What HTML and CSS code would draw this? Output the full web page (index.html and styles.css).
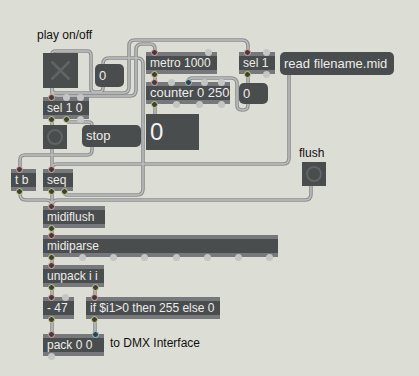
FILE: index.html
```html
<!DOCTYPE html>
<html lang="en">
<head>
    <meta charset="UTF-8">
    <title>midi player patch</title>
    <link rel="stylesheet" href="styles.css">
</head>
<body>
    <div class="patcher">
        <!-- patch cords, drawn under the boxes -->
        <svg class="cords" width="419" height="376" viewBox="0 0 419 376">
            <g class="cord-edge">
                <g id="cords">
                    <path d="M52,88 V89 Q52,93 56,93 H123 Q129,93 129,87 V46 Q129,40 135,40 H242 Q248,40 248,46 V52"/>
                    <path d="M52,88 V90 Q52,96 58,96 H130 Q136,96 136,90 V50 Q136,44 142,44 H150 Q155,44 155,49 V52"/>
                    <path d="M103,87 V88 Q103,92 99,92 H95 Q91,92 91,88 V55 Q91,51 87,51 H56 Q52,51 52,54"/>
                    <path d="M64,191 Q64,195 68,195 H137 Q143,195 143,189 V64 Q143,58 137,58 H109 Q103,58 103,64"/>
                    <path d="M248,104 V105 Q248,110 243,110 H242 Q237,110 237,105 V84 Q237,78 231,78 H193 Q188,78 188,82"/>
                    <path d="M66,119 Q66,122 70,122 H88 Q92,122 92,125"/>
                    <path d="M92,147 V150 Q92,155 87,155 H25 Q20,155 20,160 V169"/>
                    <path d="M289,75 V158 Q289,164 283,164 H57 Q52,164 52,169"/>
                    <path d="M20,191 V194 Q20,200 26,200 H46 Q52,200 52,206"/>
                    <path d="M311,186 V194 Q311,200 305,200 H58 Q52,200 52,206"/>
                    <path d="M52,88 V97 M52,119 V125 M52,149 V169 M155,73 V82 M155,104 V114 M248,73 V83 M52,191 V206 M52,227 V235 M52,257 V265 M52,287 V297 M95,287 V297 M52,318 V334 M95,318 V334"/>
                </g>
            </g>
            <use href="#cords" class="cord-core"/>
        </svg>

        <div class="comment play-label">play on/off</div>
        <div class="comment flush-label">flush</div>
        <div class="comment dmx-label">to DMX Interface</div>

        <div class="toggle">
            <svg width="35" height="35" viewBox="0 0 35 35">
                <path d="M8.5,8.5 L26.5,26.5 M26.5,8.5 L8.5,26.5"/>
            </svg>
        </div>

        <div class="msg msg-zero">0</div>

        <div class="obj sel-10">sel 1 0
            <div class="ports in"><i class="p on-in"></i><i class="p"></i><i class="p"></i></div>
            <div class="ports out"><i class="p on-out"></i><i class="p on-out"></i><i class="p"></i></div>
        </div>

        <div class="bang bang-play"></div>
        <div class="msg msg-stop">stop</div>

        <div class="obj metro">metro 1000
            <div class="ports in"><i class="p on-in"></i><i class="p"></i></div>
            <div class="ports out"><i class="p on-out"></i></div>
        </div>

        <div class="obj sel-1">sel 1
            <div class="ports in"><i class="p on-in"></i><i class="p"></i></div>
            <div class="ports out"><i class="p on-out"></i><i class="p"></i></div>
        </div>

        <div class="msg msg-read">read filename.mid</div>

        <div class="obj counter">counter 0 250
            <div class="ports in"><i class="p on-in"></i><i class="p"></i><i class="p on-cold"></i><i class="p"></i><i class="p"></i></div>
            <div class="ports out"><i class="p on-out"></i><i class="p"></i><i class="p"></i><i class="p"></i></div>
        </div>

        <div class="msg msg-reset">0</div>

        <div class="number">0</div>

        <div class="bang bang-flush"></div>

        <div class="obj tb">t b
            <div class="ports in"><i class="p on-in"></i></div>
            <div class="ports out"><i class="p on-out"></i></div>
        </div>

        <div class="obj seq">seq
            <div class="ports in"><i class="p on-in"></i></div>
            <div class="ports out"><i class="p on-out"></i><i class="p on-out"></i></div>
        </div>

        <div class="obj midiflush">midiflush
            <div class="ports in"><i class="p on-in"></i></div>
            <div class="ports out"><i class="p on-out"></i></div>
        </div>

        <div class="obj midiparse">midiparse
            <div class="ports in"><i class="p on-in"></i></div>
            <div class="ports out"><i class="p on-out"></i><i class="p"></i><i class="p"></i><i class="p"></i><i class="p"></i><i class="p"></i><i class="p"></i><i class="p"></i></div>
        </div>

        <div class="obj unpack">unpack i i
            <div class="ports in"><i class="p on-in"></i></div>
            <div class="ports out"><i class="p on-out"></i><i class="p on-out"></i></div>
        </div>

        <div class="obj minus">- 47
            <div class="ports in"><i class="p on-in"></i><i class="p"></i></div>
            <div class="ports out"><i class="p on-out"></i></div>
        </div>

        <div class="obj expr-if">if $i1&gt;0 then 255 else 0
            <div class="ports in"><i class="p on-in"></i></div>
            <div class="ports out"><i class="p on-out"></i></div>
        </div>

        <div class="obj pack">pack 0 0
            <div class="ports in"><i class="p on-in"></i><i class="p on-cold"></i></div>
            <div class="ports out"><i class="p"></i></div>
        </div>
    </div>
</body>
</html>
```

FILE: styles.css
```css
body {
    margin: 0;
    background-color: #dcddd5;
    font-family: "Liberation Sans", Arial, sans-serif;
    font-size: 12px;
}

.patcher {
    position: relative;
    width: 419px;
    height: 376px;
    overflow: hidden;
}

/* cords */
.cords {
    position: absolute;
    left: 0;
    top: 0;
}

.cord-edge {
    fill: none;
    stroke: #8c8d8e;
    stroke-width: 3.6;
}

.cord-core {
    fill: none;
    stroke: #bfc0c0;
    stroke-width: 1.4;
}

/* comments */
.comment {
    position: absolute;
    color: #111;
    line-height: 14px;
    white-space: nowrap;
}

.play-label { left: 37px; top: 28px; }
.flush-label { left: 299px; top: 146px; }
.dmx-label { left: 110px; top: 336px; }

/* object boxes */
.obj {
    position: absolute;
    box-sizing: border-box;
    height: 22px;
    padding: 0 4px;
    line-height: 14px;
    border-top: 4px solid #76787b;
    border-bottom: 4px solid #76787b;
    background-color: #4a4d4d;
    color: #ececec;
    white-space: nowrap;
}

.ports {
    position: absolute;
    left: 5px;
    right: 5px;
    display: flex;
    justify-content: space-between;
}

.ports.in { top: -7.5px; }
.ports.out { bottom: -7.5px; }

.p {
    display: block;
    box-sizing: border-box;
    width: 7px;
    height: 7px;
    border-radius: 50%;
    background-color: #c4c5c5;
}

.p.on-in,
.p.on-out,
.p.on-cold {
    background-color: #3c3f3f;
    border: 1.5px solid #e9a29d;
}

.p.on-out { border-color: #cdd27a; }
.p.on-cold { border-color: #8ccee0; }

.sel-10 { left: 43px; top: 97px; width: 46px; }
.metro { left: 146px; top: 52px; width: 71px; }
.sel-1 { left: 239px; top: 52px; width: 36px; }
.counter { left: 146px; top: 82px; width: 84px; font-size: 13px; }
.tb { left: 11px; top: 169px; width: 25px; }
.seq { left: 43px; top: 169px; width: 30px; }
.midiflush { left: 43px; top: 206px; width: 62px; }
.midiparse { left: 43px; top: 235px; width: 235px; }
.unpack { left: 43px; top: 265px; width: 61px; }
.minus { left: 43px; top: 297px; width: 31px; }
.expr-if { left: 86px; top: 297px; width: 134px; }
.pack { left: 43px; top: 334px; width: 61px; }

/* message boxes */
.msg {
    position: absolute;
    box-sizing: border-box;
    padding: 0 4px;
    border-radius: 5px;
    background-color: #4a4d4d;
    color: #ececec;
    font-size: 13px;
    white-space: nowrap;
}

.msg-zero { left: 95px; top: 64px; width: 29px; height: 23px; line-height: 23px; }
.msg-stop { left: 82px; top: 125px; width: 59px; height: 22px; line-height: 22px; }
.msg-read { left: 280px; top: 52px; width: 114px; height: 23px; line-height: 23px; }
.msg-reset { left: 239px; top: 83px; width: 29px; height: 21px; line-height: 21px; }

/* ui objects */
.toggle {
    position: absolute;
    left: 43px;
    top: 53px;
    width: 35px;
    height: 35px;
    background-color: #4a4d4d;
}

.toggle svg {
    display: block;
}

.toggle path {
    stroke: #606464;
    stroke-width: 2.6;
}

.bang {
    position: absolute;
    width: 24px;
    height: 24px;
    display: flex;
    align-items: center;
    justify-content: center;
    background-color: #4a4d4d;
}

.bang::after {
    content: "";
    width: 16px;
    height: 16px;
    box-sizing: border-box;
    border: 2px solid #606464;
    border-radius: 50%;
}

.bang-play { left: 43px; top: 125px; }
.bang-flush { left: 302px; top: 162px; }

.number {
    position: absolute;
    left: 146px;
    top: 114px;
    width: 53px;
    height: 36px;
    box-sizing: border-box;
    padding: 4px 0 0 4px;
    background-color: #4a4d4d;
    color: #f2f2f2;
    font-size: 24px;
    line-height: 28px;
}
```
